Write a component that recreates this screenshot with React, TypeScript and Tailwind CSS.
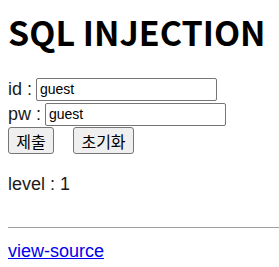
import React from "react";

export default function App() {
  return (
    <div className="min-h-[267px] w-[279px] bg-white px-2 text-[18px] text-[#1a1a1a] font-['Liberation_Sans',Arial,sans-serif]">
      <h1 className="pt-[12px] text-[34px] font-bold leading-[40px] text-black font-['Noto_Sans_CJK_KR','Noto_Sans',sans-serif]">
        SQL INJECTION
      </h1>
      <div className="mt-[26px] flex items-center gap-[4px] leading-[23px]">
        <span>id :</span>
        <input
          defaultValue="guest"
          className="h-[23px] w-[181px] rounded-[2px] border border-[#767676] px-[3px] text-[14px] text-black outline-none font-['Liberation_Sans',Arial,sans-serif]"
        />
      </div>
      <div className="mt-[2px] flex items-center gap-[4px] leading-[23px]">
        <span>pw :</span>
        <input
          defaultValue="guest"
          className="h-[23px] w-[181px] rounded-[2px] border border-[#767676] px-[3px] text-[14px] text-black outline-none font-['Liberation_Sans',Arial,sans-serif]"
        />
      </div>
      <div className="mt-[1px] flex gap-[19px]">
        <button className="h-[27px] w-[46px] rounded-[3px] border border-[#767676] bg-[#efefef] text-[16px] leading-none text-black font-['Noto_Sans_CJK_KR',sans-serif]">
          제출
        </button>
        <button className="h-[27px] w-[61px] rounded-[3px] border border-[#767676] bg-[#efefef] text-[16px] leading-none text-black font-['Noto_Sans_CJK_KR',sans-serif]">
          초기화
        </button>
      </div>
      <p className="mt-[19px] leading-[23px]">level : 1</p>
      <hr className="mt-[31px] -mr-2 border-t border-[#a0a0a0]" />
      <a href="#" className="mt-[12px] block leading-[22px] text-[#0000ee] underline">
        view-source
      </a>
    </div>
  );
}
